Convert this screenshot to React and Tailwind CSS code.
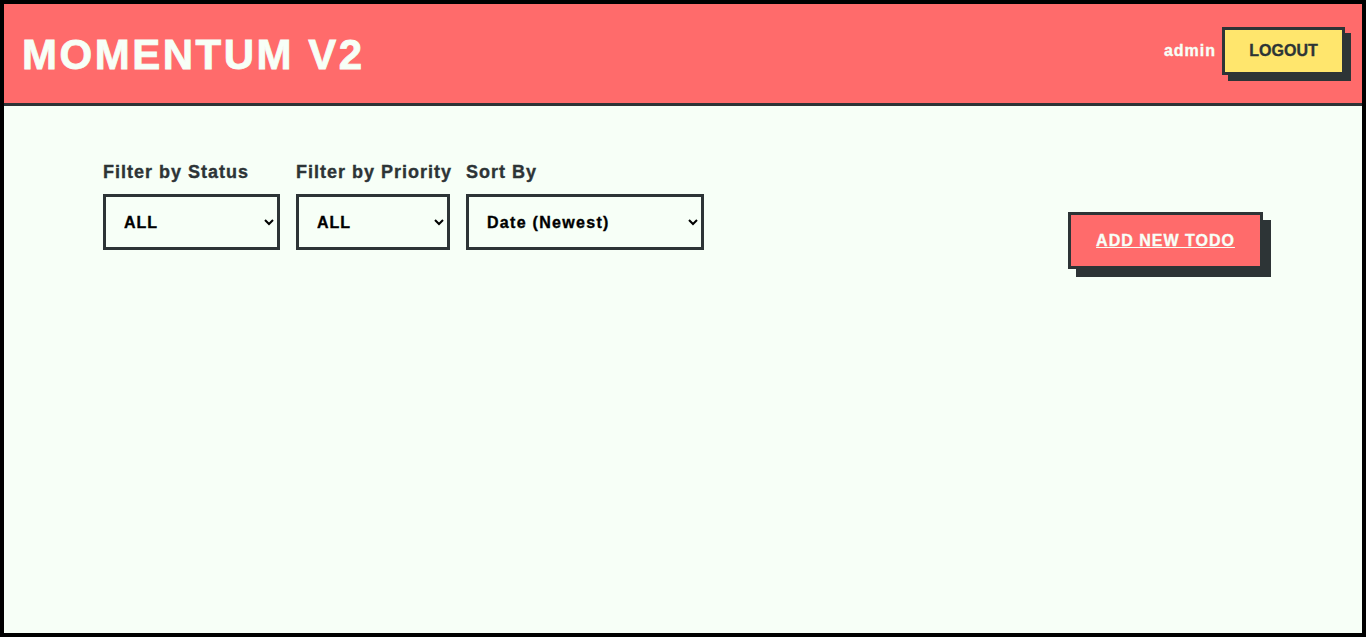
export default function App() {
  return (
    <div
      className="h-[637px] w-[1366px] border-4 border-black bg-[#f7fff7] flex flex-col overflow-hidden [-webkit-text-stroke:0.35px]"
      style={{ fontFamily: '"Liberation Sans", Arial, sans-serif' }}
    >
      <header className="h-[102px] shrink-0 bg-[#ff6b6b] border-b-[3px] border-[#2d3436] flex items-center justify-between pl-[18px] pr-[17px]">
        <h1 className="text-[42px] font-bold tracking-[0.06em] text-[#f7fff7] leading-none mt-[2px] [-webkit-text-stroke:0.8px]">
          MOMENTUM V2
        </h1>
        <div className="flex items-center gap-[6px] mb-[6px]">
          <span className="text-[16px] font-bold tracking-[1px] text-[#f7fff7]">admin</span>
          <button className="h-[48px] w-[123px] bg-[#ffe66d] border-[3px] border-[#2d3436] text-[16px] font-bold text-[#2d3436] shadow-[6px_6px_0_#2d3436]">
            LOGOUT
          </button>
        </div>
      </header>

      <main className="w-full max-w-[1200px] mx-auto px-5 pt-[53px] flex justify-between items-start">
        <div className="flex gap-4">
          <div className="flex flex-col w-[177px]">
            <label className="text-[18px] font-bold tracking-[1px] whitespace-nowrap text-[#2d3436] mb-[8px]">Filter by Status</label>
            <select className="h-[56px] w-[177px] border-[3px] border-[#2d3436] bg-[#f7fff7] pl-[14px] pr-[6px] text-[16px] font-bold tracking-[1px] text-black">
              <option>ALL</option>
            </select>
          </div>
          <div className="flex flex-col w-[154px]">
            <label className="text-[18px] font-bold tracking-[1px] whitespace-nowrap text-[#2d3436] mb-[8px]">Filter by Priority</label>
            <select className="h-[56px] w-[154px] border-[3px] border-[#2d3436] bg-[#f7fff7] pl-[14px] pr-[6px] text-[16px] font-bold tracking-[1px] text-black">
              <option>ALL</option>
            </select>
          </div>
          <div className="flex flex-col w-[238px]">
            <label className="text-[18px] font-bold tracking-[1px] whitespace-nowrap text-[#2d3436] mb-[8px]">Sort By</label>
            <select className="h-[56px] w-[238px] border-[3px] border-[#2d3436] bg-[#f7fff7] pl-[14px] pr-[6px] text-[16px] font-bold tracking-[1.3px] text-black">
              <option>Date (Newest)</option>
            </select>
          </div>
        </div>
        <a
          href="#"
          className="mt-[53px] h-[57px] w-[195px] bg-[#ff6b6b] border-[3px] border-[#2d3436] shadow-[8px_8px_0_#2d3436] flex items-center justify-center text-[16px] font-bold tracking-[1px] text-[#f7fff7] underline"
        >
          ADD NEW TODO
        </a>
      </main>
    </div>
  );
}
